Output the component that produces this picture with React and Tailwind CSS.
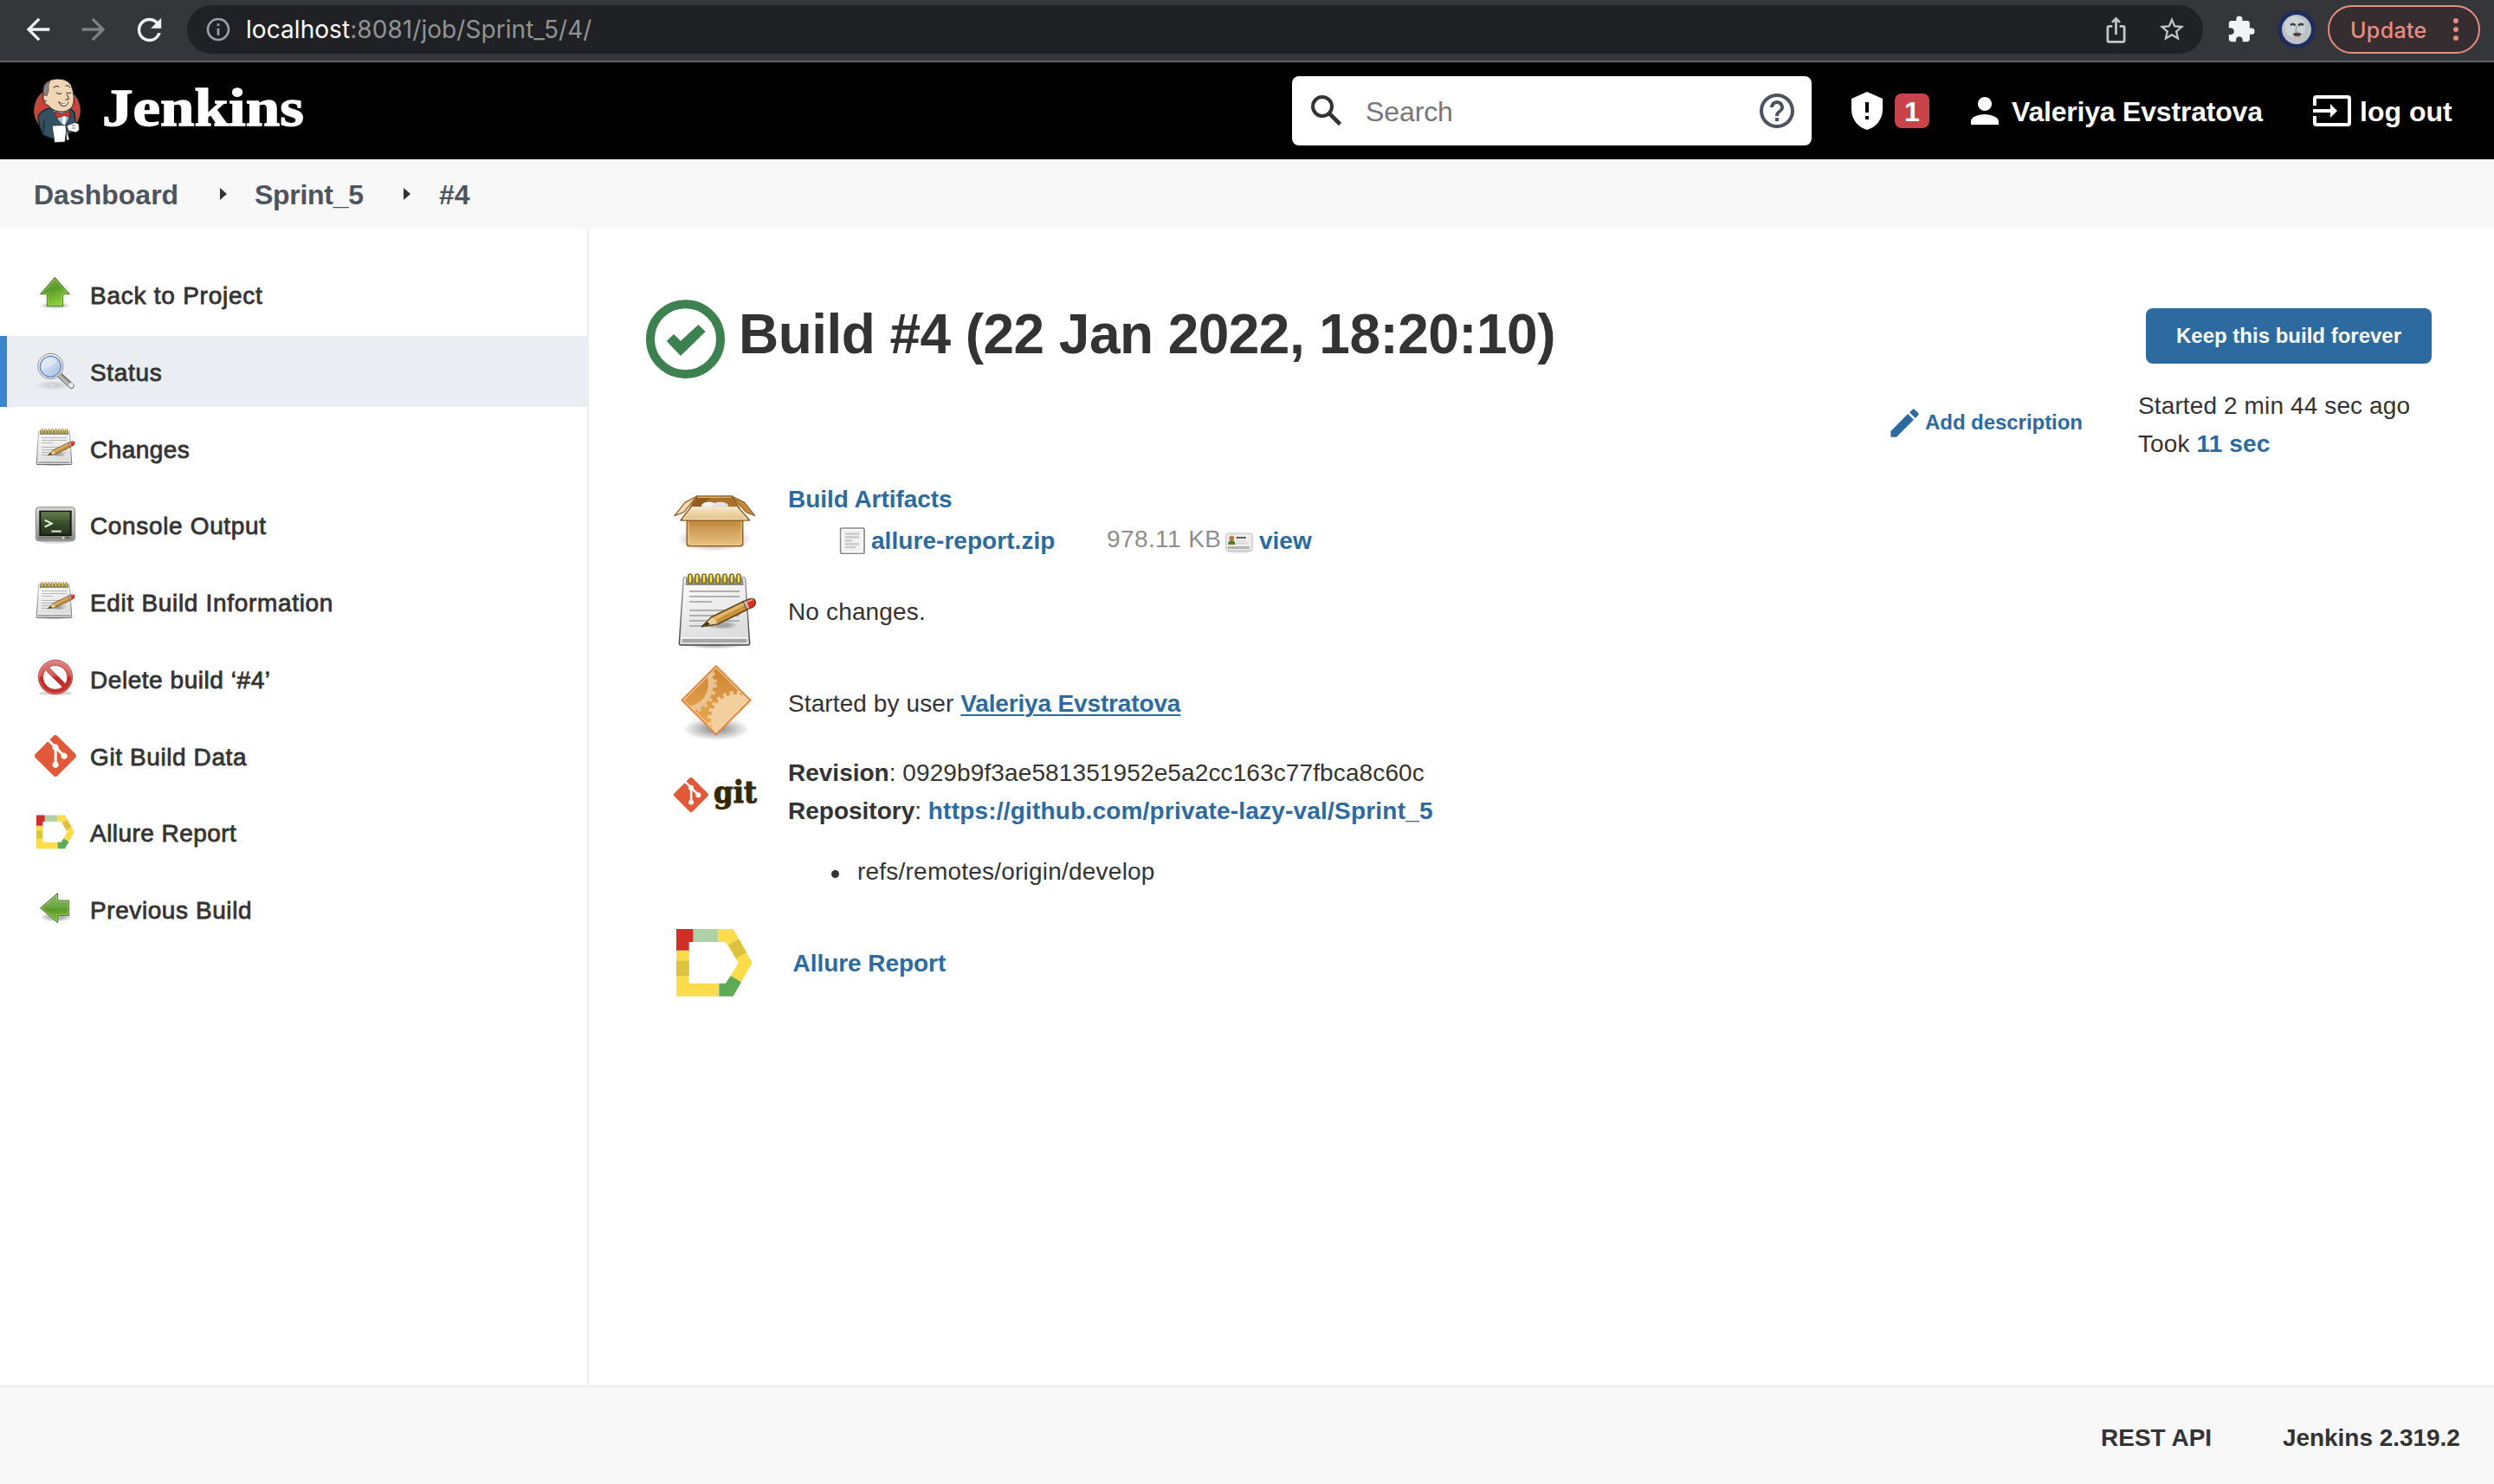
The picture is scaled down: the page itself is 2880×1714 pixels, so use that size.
import React from 'react';
import {
  MdArrowBack,
  MdArrowForward,
  MdEdit,
  MdExtension,
  MdHelpOutline,
  MdInfoOutline,
  MdIosShare,
  MdPerson,
  MdRefresh,
  MdStarBorder,
} from 'react-icons/md';
import { SiGit } from 'react-icons/si';

/* ---------- Drawn icons ---------- */

function UpArrow({ className }) {
  return (
    <svg viewBox="120 52 144 144" className={className}>
      <defs>
        <linearGradient id="up-fill" x1="0" y1="0" x2="0.4" y2="1">
          <stop offset="0" stopColor="#7fae52" />
          <stop offset="0.5" stopColor="#5f9c2b" />
          <stop offset="1" stopColor="#86cf3a" />
        </linearGradient>
        <radialGradient id="up-shadow">
          <stop offset="0.5" stopColor="#000" stopOpacity="0.22" />
          <stop offset="1" stopColor="#000" stopOpacity="0" />
        </radialGradient>
      </defs>
      <ellipse cx="191" cy="163" rx="56" ry="12" fill="url(#up-shadow)" />
      <path d="M190 65L241 123H218V164H163V123H140Z" fill="url(#up-fill)" stroke="#3f7a0c" strokeWidth="3" />
      <path d="M190 71L233 120H215V161H166V120H147Z" fill="none" stroke="#b5d893" strokeWidth="2" opacity="0.8" />
    </svg>
  );
}

function LeftArrow({ className }) {
  return (
    <svg viewBox="120 1042 144 144" className={className}>
      <defs>
        <linearGradient id="left-fill" x1="0" y1="0" x2="0" y2="1">
          <stop offset="0" stopColor="#8dbb66" />
          <stop offset="0.48" stopColor="#6ba53f" />
          <stop offset="0.55" stopColor="#5c9a2a" />
          <stop offset="1" stopColor="#84c23d" />
        </linearGradient>
        <radialGradient id="left-shadow">
          <stop offset="0.4" stopColor="#000" stopOpacity="0.3" />
          <stop offset="1" stopColor="#000" stopOpacity="0" />
        </radialGradient>
      </defs>
      <ellipse cx="195" cy="1141" rx="58" ry="18" fill="url(#left-shadow)" />
      <path d="M200 1059V1084H239V1136H200V1161L140 1110Z" fill="url(#left-fill)" stroke="#41761a" strokeWidth="3" />
      <path d="M197 1066V1087H236V1133H197V1155L145 1110Z" fill="none" stroke="#bfe09d" strokeWidth="2" opacity="0.8" />
    </svg>
  );
}

function Magnifier({ className }) {
  return (
    <svg viewBox="120 316 144 144" className={className}>
      <defs>
        <linearGradient id="lens" x1="0" y1="0" x2="1" y2="1">
          <stop offset="0" stopColor="#d7e3f2" />
          <stop offset="0.55" stopColor="#c3d5ec" />
          <stop offset="1" stopColor="#a3bee0" />
        </linearGradient>
        <radialGradient id="lens-shadow">
          <stop offset="0" stopColor="#fff" stopOpacity="0.9" />
          <stop offset="0.3" stopColor="#999" stopOpacity="0.35" />
          <stop offset="1" stopColor="#999" stopOpacity="0" />
        </radialGradient>
      </defs>
      <ellipse cx="183" cy="436" rx="62" ry="17" fill="url(#lens-shadow)" />
      <path d="M208 402L247 438" stroke="#6b6d69" strokeWidth="20" strokeLinecap="round" />
      <path d="M208 402L247 438" stroke="#b9bab7" strokeWidth="14" strokeLinecap="round" />
      <path d="M213 400L244 428" stroke="#7a7c78" strokeWidth="4" />
      <circle cx="246" cy="436" r="8" fill="#eee" />
      <circle cx="175" cy="370" r="44" fill="#f1f1ef" stroke="#8b8d88" strokeWidth="3" />
      <circle cx="175" cy="371" r="36" fill="url(#lens)" stroke="#5f86bf" strokeWidth="4" />
      <path d="M145 376a31 31 0 0 1 52-26c-2 16-22 20-50 34Z" fill="#fff" opacity="0.4" />
    </svg>
  );
}

function Notepad({ className }) {
  return (
    <svg viewBox="60 360 288 288" className={className}>
      <defs>
        <linearGradient id="pad-paper" x1="0" y1="0" x2="0.3" y2="1">
          <stop offset="0" stopColor="#ffffff" />
          <stop offset="1" stopColor="#dcdcdc" />
        </linearGradient>
        <linearGradient id="pad-edge" x1="0" y1="0" x2="0" y2="1">
          <stop offset="0" stopColor="#a6a6a6" />
          <stop offset="1" stopColor="#454545" />
        </linearGradient>
        <radialGradient id="pad-shadow">
          <stop offset="0.4" stopColor="#000" stopOpacity="0.28" />
          <stop offset="1" stopColor="#000" stopOpacity="0" />
        </radialGradient>
      </defs>
      <ellipse cx="195" cy="613" rx="110" ry="16" fill="url(#pad-shadow)" />
      <path d="M94 380H296Q302 380 302 386L317 610Q317 615 312 615H78Q73 615 73 610L88 386Q88 380 94 380Z" fill="url(#pad-paper)" stroke="url(#pad-edge)" strokeWidth="4.5" />
      <path d="M96 384H294L296 408H95Z" fill="#8d8e89" />
      <path d="M84 594H306L307 606H83Z" fill="#a7a7a7" />
      <path d="M79 590H311" stroke="#fff" strokeWidth="3" />
      <path d="M108 429H282M108 447H282M108 465H186M108 495H282M108 513H282M108 531H282M108 549H190" stroke="#b0b0b0" strokeWidth="5.5" />
      <g fill="#fbe75b" stroke="#8b7418" strokeWidth="5">
        <rect x="105" y="369" width="12" height="32" rx="6" />
        <rect x="129" y="369" width="12" height="32" rx="6" />
        <rect x="153" y="369" width="12" height="32" rx="6" />
        <rect x="177" y="369" width="12" height="32" rx="6" />
        <rect x="201" y="369" width="12" height="32" rx="6" />
        <rect x="225" y="369" width="12" height="32" rx="6" />
        <rect x="249" y="369" width="12" height="32" rx="6" />
        <rect x="273" y="369" width="12" height="32" rx="6" />
      </g>
      <ellipse cx="222" cy="546" rx="56" ry="15" fill="url(#pad-shadow)" />
      <path d="M151 551L186 517L297 463L309 492L208 542Z" fill="#c8913c" stroke="#5a4010" strokeWidth="4.5" strokeLinejoin="round" />
      <path d="M190 520L296 468L300 476L198 528Z" fill="#e2b86e" />
      <path d="M155 548L187 519L198 526L205 541Z" fill="#e6cf98" />
      <path d="M152 550L172 535L179 544Z" fill="#2e2a1c" />
      <path d="M295 464L318 455Q332 451 336 462Q341 476 327 484L308 492Z" fill="#dd2f28" stroke="#5a4010" strokeWidth="4" />
      <path d="M296 466L307 461L315 487L308 490Z" fill="#b9bcc0" />
      <path d="M311 464L326 458" stroke="#f79a8f" strokeWidth="6" strokeLinecap="round" />
    </svg>
  );
}

function Terminal({ className }) {
  return (
    <svg viewBox="120 851 144 144" className={className}>
      <defs>
        <linearGradient id="term-case" x1="0" y1="0" x2="0" y2="1">
          <stop offset="0" stopColor="#d4d5d2" />
          <stop offset="0.6" stopColor="#a3a5a0" />
          <stop offset="1" stopColor="#777974" />
        </linearGradient>
        <linearGradient id="term-screen" x1="0" y1="0" x2="0" y2="1">
          <stop offset="0" stopColor="#6c8a55" />
          <stop offset="0.5" stopColor="#3c5230" />
          <stop offset="1" stopColor="#25331d" />
        </linearGradient>
      </defs>
      <ellipse cx="192" cy="981" rx="50" ry="8" fill="#000" opacity="0.12" />
      <rect x="124.500" y="862.500" width="135" height="117" rx="11" fill="url(#term-case)" stroke="#7b7d78" strokeWidth="3" />
      <rect x="128" y="866" width="128" height="110" rx="8" fill="none" stroke="#eee" strokeWidth="2" opacity="0.7" />
      <rect x="136" y="874" width="112" height="88" rx="2" fill="#10150d" />
      <rect x="142" y="879" width="100" height="78" fill="url(#term-screen)" />
      <path d="M142 886H242M142 894H242M142 902H242M142 910H242M142 918H242M142 926H242M142 934H242" stroke="#1e2b16" strokeWidth="2" opacity="0.45" />
      <path d="M155 907L179 919L155 931" fill="none" stroke="#eef8e6" strokeWidth="6" />
      <path d="M178 946H212" stroke="#e2f3d8" strokeWidth="6" />
      <rect x="216" y="965" width="7" height="7" fill="#c9f0a8" />
      <rect x="226" y="964" width="13" height="9" fill="#666" />
    </svg>
  );
}

function NoEntry({ className }) {
  return (
    <svg viewBox="120 243 144 144" className={className}>
      <defs>
        <linearGradient id="no-fill" x1="0" y1="0" x2="0" y2="1">
          <stop offset="0" stopColor="#e08480" />
          <stop offset="0.47" stopColor="#d65551" />
          <stop offset="0.5" stopColor="#c22723" />
          <stop offset="1" stopColor="#c9302b" />
        </linearGradient>
      </defs>
      <ellipse cx="192" cy="365" rx="58" ry="8" fill="#000" opacity="0.15" />
      <path
        fillRule="evenodd"
        d="M192 250a59 59 0 1 0 0 118a59 59 0 1 0 0-118ZM157 284L217 344A43 43 0 0 1 157 284ZM169 275A42 42 0 0 1 227 333Z"
        fill="url(#no-fill)"
        stroke="#a8413e"
        strokeWidth="2.500"
      />
      <circle cx="192" cy="309" r="55.500" fill="none" stroke="#efb0ad" strokeWidth="2" opacity="0.7" />
    </svg>
  );
}

function AllureLogo({ className }) {
  return (
    <svg viewBox="53 642 288 288" className={className}>
      <path d="M65 743H109V857H213V902H65Z" fill="#fbdc4b" />
      <path d="M65 779H109V831H65Z" fill="#dcc241" />
      <path d="M65 669H124V714H109V743H65Z" fill="#d12e27" />
      <path d="M124 669H210V714H124Z" fill="#b0d0a8" />
      <path d="M210 669H262L328 786L290 853L253 831L280 786L236 714H210Z" fill="#fbdc4b" />
      <path d="M245 724L282 704L308 750L272 772Z" fill="#dcc241" />
      <path d="M213 857H236L253 831L290 853L262 902H213Z" fill="#5faa55" />
    </svg>
  );
}

function PackageBox({ className }) {
  return (
    <svg viewBox="50 60 288 288" className={className}>
      <defs>
        <linearGradient id="box-front" x1="0" y1="0" x2="0" y2="1">
          <stop offset="0" stopColor="#b98135" />
          <stop offset="0.35" stopColor="#cf9d55" />
          <stop offset="1" stopColor="#e9c283" />
        </linearGradient>
        <linearGradient id="box-flap" x1="0" y1="0" x2="0" y2="1">
          <stop offset="0" stopColor="#f4e6c8" />
          <stop offset="1" stopColor="#e3bd7e" />
        </linearGradient>
        <radialGradient id="box-shadow">
          <stop offset="0.6" stopColor="#000" stopOpacity="0.2" />
          <stop offset="1" stopColor="#000" stopOpacity="0" />
        </radialGradient>
      </defs>
      <ellipse cx="193" cy="248" rx="130" ry="43" fill="url(#box-shadow)" />
      <path d="M99 180H292V264Q292 272 284 272H107Q99 272 99 264Z" fill="url(#box-front)" stroke="#99642a" strokeWidth="5" />
      <path d="M104 186V262Q104 267 109 267H282Q287 267 287 262V186" fill="none" stroke="#f5dcae" strokeWidth="3" opacity="0.8" />
      <path d="M134 99L92 121L56 167L88 155Z" fill="#f1ddb6" stroke="#99642a" strokeWidth="4" strokeLinejoin="round" />
      <path d="M254 99L298 121L334 167L304 155Z" fill="#c98b3b" stroke="#99642a" strokeWidth="4" strokeLinejoin="round" />
      <path d="M134 99H254L280 140H110Z" fill="#a87329" stroke="#99642a" strokeWidth="5" strokeLinejoin="round" />
      <path d="M134 104H180L150 136H116Z" fill="#8e5d1e" />
      <path d="M136 103H252" stroke="#f0d3a0" strokeWidth="2.500" />
      <ellipse cx="175" cy="133" rx="26" ry="14" fill="#f3f3f3" />
      <ellipse cx="215" cy="133" rx="27" ry="14" fill="#e3e3e3" />
      <path d="M112 138H276L316 183H77Z" fill="url(#box-flap)" stroke="#99642a" strokeWidth="5" strokeLinejoin="round" />
      <path d="M114 139H274" stroke="#faf0d8" strokeWidth="6" />
      <path d="M115 142L86 179H306L274 142" fill="none" stroke="#f9ecd0" strokeWidth="3" />
    </svg>
  );
}

function DocumentIcon({ className }) {
  return (
    <svg viewBox="624 200 96 96" className={className}>
      <rect x="632" y="206" width="82" height="88" rx="4" fill="#f1f1f1" stroke="#858585" strokeWidth="5" />
      <rect x="637" y="211" width="72" height="78" fill="none" stroke="#fff" strokeWidth="4" />
      <path d="M648 226H696M648 237H696M648 249H672M648 261H696M648 272H684" stroke="#c6c6c6" strokeWidth="6.500" />
    </svg>
  );
}

function BadgeCard({ className }) {
  return (
    <svg viewBox="0 0 32 24" className={className}>
      <ellipse cx="16" cy="21.500" rx="14" ry="2" fill="#000" opacity="0.15" />
      <rect x="0.700" y="1" width="30.500" height="20" rx="2" fill="#ededed" stroke="#bdbdbd" strokeWidth="1" />
      <circle cx="7.300" cy="6.800" r="3" fill="#c07a35" />
      <path d="M3 14Q3 9 7.300 9.200Q11.600 9 11.600 14Z" fill="#5c7a2c" />
      <path d="M13 6H24" stroke="#333" strokeWidth="1.800" strokeDasharray="2 .6" />
      <path d="M13 10H24M13 12.500H26" stroke="#cfcfcf" strokeWidth="1.200" />
      <path d="M3 17.500H28" stroke="#888" strokeWidth="3" strokeDasharray="1 .8" />
    </svg>
  );
}

function GearDiamond({ className }) {
  return (
    <svg viewBox="56 672 288 288" className={className}>
      <defs>
        <linearGradient id="dia-fill" x1="0" y1="0" x2="0" y2="1">
          <stop offset="0" stopColor="#cb8434" />
          <stop offset="1" stopColor="#eeae55" />
        </linearGradient>
        <radialGradient id="dia-shadow">
          <stop offset="0" stopColor="#000" stopOpacity="0.5" />
          <stop offset="1" stopColor="#000" stopOpacity="0" />
        </radialGradient>
        <clipPath id="dia-clip">
          <path d="M200 695L312 806L200 917L88 806Z" />
        </clipPath>
      </defs>
      <ellipse cx="200" cy="906" rx="116" ry="40" fill="url(#dia-shadow)" />
      <path d="M200 686L320 806L200 926L80 806Z" fill="url(#dia-fill)" />
      <g clipPath="url(#dia-clip)">
        <circle cx="94" cy="750" r="88" fill="none" stroke="#eac391" strokeWidth="18" />
        <circle cx="94" cy="750" r="102" fill="none" stroke="#eac391" strokeWidth="12" strokeDasharray="12 14" />
        <circle cx="268" cy="872" r="86" fill="#f3cf9f" />
        <circle cx="268" cy="872" r="91" fill="none" stroke="#f3cf9f" strokeWidth="14" strokeDasharray="11 13" />
      </g>
      <path d="M200 693L313 806L200 919L87 806Z" fill="none" stroke="#f8dcb4" strokeWidth="4" opacity="0.75" />
      <path d="M200 687L319 806L200 925L81 806Z" fill="none" stroke="#e47f33" strokeWidth="5" />
    </svg>
  );
}

function SuccessIcon({ className }) {
  return (
    <svg viewBox="0 0 92 92" className={className}>
      <circle cx="45.500" cy="45.700" r="40.500" fill="none" stroke="#3e8150" strokeWidth="10" />
      <path d="M23.700 48L32 40L40 47.700L60.500 29L68.700 37L40 65Z" fill="#3e8150" />
    </svg>
  );
}

function Butler({ className }) {
  return (
    <svg viewBox="36 86 60 84" className={className}>
      <ellipse cx="66" cy="127.500" rx="26.500" ry="27" fill="#c8443a" stroke="#6b6b6b" strokeWidth="0.800" />
      <path d="M44 134Q48 127 57 125L80 124L86 130L88 150L79 155L76 160H60L50 156Q45 148 44 134Z" fill="#335061" stroke="#111c24" strokeWidth="1.200" />
      <path d="M51 138L50 153" stroke="#111c24" strokeWidth="1" />
      <path d="M62 128L80 128L79 137L74 146L67 138Z" fill="#9fc0d8" />
      <path d="M72 134L76 134L75 146L72 141Z" fill="#fff" />
      <path d="M50 104Q50 92 66 91Q82 91 84 104Q86 112 85 119Q83 127 74 129Q62 130 56 122Q50 120 50 113Z" fill="#f0d6b7" stroke="#2b2118" strokeWidth="1" />
      <path d="M50 108Q49 97 58 93Q55 97 56 105L54 111Q52 107 50 108Z" fill="#8a8482" stroke="#3a3633" strokeWidth="0.700" />
      <path d="M53 110Q49 109 50 114Q51 118 54 117" fill="#f0d6b7" stroke="#2b2118" strokeWidth="0.900" />
      <path d="M62 101Q65 98 68 100M76 99Q80 98 81 101M65 107Q68 110 71 108M77 107Q80 109 82 107M77 109Q80 113 79 115L76 115M68 118Q74 122 79 118Q77 124 71 122Z" fill="none" stroke="#2b2118" strokeWidth="1" strokeLinecap="round" />
      <path d="M69 119Q74 121 79 118Q77 121.500 73 121.500Z" fill="#fff" />
      <path d="M63.500 129L71 131.500L80 128.500L81.500 135L74.500 133.500L65 136Z" fill="#d33833" stroke="#5a1512" strokeWidth="0.800" />
      <path d="M60 145L76 144.500L76.500 152L75 164L63 164.500Z" fill="#fff" stroke="#222" strokeWidth="0.800" />
      <path d="M77 145L86 141.500L91 143L91.500 150L88 153L79 151Z" fill="#fff" stroke="#222" strokeWidth="0.800" />
      <path d="M83 145H87M83 148H87" stroke="#444" strokeWidth="0.800" />
      <path d="M77 152L80 161L77 162Z" fill="#dfe6ea" />
    </svg>
  );
}

function Avatar({ className }) {
  return (
    <svg viewBox="0 0 44 44" className={className}>
      <circle cx="22" cy="22" r="22" fill="#1f2d5c" />
      <circle cx="22" cy="22" r="17" fill="#b9c3c6" />
      <circle cx="20" cy="19" r="12" fill="#ccd4d5" />
      <path d="M15 17Q18 14.500 20.500 17.500M24 17.500Q27 14.500 30 17" fill="none" stroke="#3b3f45" strokeWidth="2.500" />
      <path d="M22 18L21 25H24" fill="none" stroke="#8b8f90" strokeWidth="1.200" />
      <path d="M17.500 27Q22.500 24.500 28 27L25 30H20Z" fill="#4a3f40" />
      <path d="M20.500 29.500H26" stroke="#a33f3f" strokeWidth="1.500" />
    </svg>
  );
}

function ShieldAlert({ className }) {
  return (
    <svg viewBox="0 0 36 44" className={className}>
      <path d="M18 0L36 8V20C36 32 28.500 41 18 44C7.500 41 0 32 0 20V8Z" fill="#fff" />
      <path d="M16 12H20V24H16ZM16 28H20V32H16Z" fill="#000" />
    </svg>
  );
}

function LogoutIcon({ className }) {
  return (
    <svg viewBox="0 0 44 36" className={className}>
      <path d="M2 12V4Q2 2 4 2H40Q42 2 42 4V32Q42 34 40 34H4Q2 34 2 32V24" fill="none" stroke="#fff" strokeWidth="4" />
      <path d="M0 16H20V10L28 18L20 26V20H0Z" fill="#fff" />
    </svg>
  );
}

function SearchIcon({ className }) {
  return (
    <svg viewBox="0 0 36 36" className={className}>
      <circle cx="13" cy="13" r="11" fill="none" stroke="#333" strokeWidth="4" />
      <path d="M21 21L33.500 33.500" stroke="#333" strokeWidth="4.600" />
    </svg>
  );
}

/* ---------- Page parts ---------- */

function BrowserBar() {
  return (
    <div className="flex h-[72px] items-center border-b-2 border-[#5f6166] bg-[#35363a] pb-[2px] pl-6">
      <MdArrowBack className="size-[40px] text-[#f1f3f4]" />
      <MdArrowForward className="ml-6 size-[40px] text-[#7f8084]" />
      <MdRefresh className="ml-6 size-[41px] text-[#f1f3f4]" />
      <div className="ml-[23px] flex h-[56px] w-[2328px] items-center rounded-full bg-[#202124] pl-5">
        <MdInfoOutline className="size-8 text-[#9aa0a6]" />
        <span className="ml-4 flex-1 font-['Inter',sans-serif] text-[28px] leading-[40px] tracking-[0.06px] text-[#929395]">
          <span className="text-white">localhost</span>:8081/job/Sprint_5/4/
        </span>
        <MdIosShare className="size-[33px] text-[#c4c5c7]" />
        <MdStarBorder className="ml-[31px] mr-[19px] size-[34px] text-[#c4c5c7]" />
      </div>
      <MdExtension className="ml-[27px] size-[34px] text-[#f1f3f4]" />
      <Avatar className="ml-[25px] size-[44px]" />
      <div className="ml-[14px] flex h-[56px] w-[176px] items-center rounded-full border-2 border-[#e88d84] bg-[#352d2f] pl-[24px] text-[#e88d84]">
        <span className="pt-[1px] font-['Inter',sans-serif] text-[25px] font-medium leading-8 tracking-[0.35px]">Update</span>
        <span className="ml-auto mr-[23px] flex flex-col gap-1">
          <span className="size-[6px] rounded-full bg-[#e88d84]" />
          <span className="size-[6px] rounded-full bg-[#e88d84]" />
          <span className="size-[6px] rounded-full bg-[#e88d84]" />
        </span>
      </div>
    </div>
  );
}

function Header() {
  return (
    <header className="flex h-[112px] items-center bg-black pl-9 text-[32px] font-bold leading-[40px] text-white">
      <Butler className="h-[84px] w-[60px]" />
      <svg viewBox="0 0 256 100" className="ml-3 h-[100px] w-[256px]">
        <text x="10" y="67" textLength="233" lengthAdjust="spacingAndGlyphs" fill="#fff" stroke="#fff" strokeWidth="1.400" className="font-['Liberation_Serif',serif] text-[62px] font-bold">
          Jenkins
        </text>
      </svg>
      <div className="ml-auto flex h-[80px] w-[600px] items-center rounded-lg bg-white pl-[22px] pr-4">
        <SearchIcon className="size-9" />
        <span className="ml-[27px] flex-1 pt-[2px] font-normal tracking-[-0.1px] text-[#777]">Search</span>
        <MdHelpOutline className="size-12 text-[#4d545d]" />
      </div>
      <ShieldAlert className="ml-[46px] h-[44px] w-[36px]" />
      <span className="ml-[14px] flex h-10 w-10 items-center justify-center rounded-lg bg-[#cb434a] pt-[1px]">1</span>
      <MdPerson className="ml-10 size-12" />
      <span className="ml-[7px] w-[292px] whitespace-nowrap pt-[2px] tracking-[-0.2px]">Valeriya Evstratova</span>
      <LogoutIcon className="ml-[56px] h-[36px] w-[44px]" />
      <span className="ml-[10px] mr-[47px] w-[108px] whitespace-nowrap pt-[2px]">log out</span>
    </header>
  );
}

function Crumb() {
  return (
    <svg viewBox="0 0 8 14" className="h-[14px] w-[8px]">
      <path d="M0 0L8 7L0 14Z" fill="#333" />
    </svg>
  );
}

function Breadcrumbs() {
  return (
    <nav className="flex h-[80px] items-center bg-[#f8f8f8] pl-[39px] text-[32px] font-bold leading-[40px] text-[#4d545d]">
      <span className="w-[215px] pt-[2px]">Dashboard</span>
      <Crumb />
      <span className="ml-[32px] w-[172px] pt-[2px] tracking-[-0.3px]">Sprint_5</span>
      <Crumb />
      <span className="ml-[33px] pt-[2px]">#4</span>
    </nav>
  );
}

const GitMark = ({ className }) => <SiGit className={`${className} text-[#e2593a]`} />;

const tasks = [
  { label: 'Back to Project', Icon: UpArrow, spacing: 'tracking-[0.75px]' },
  { label: 'Status', Icon: Magnifier, spacing: 'tracking-[0.65px]', active: true },
  { label: 'Changes', Icon: Notepad, spacing: 'tracking-[0.45px]' },
  { label: 'Console Output', Icon: Terminal, spacing: 'tracking-[0.65px]' },
  { label: 'Edit Build Information', Icon: Notepad, spacing: 'tracking-[0.68px]' },
  { label: 'Delete build ‘#4’', Icon: NoEntry, spacing: 'tracking-[0.55px]' },
  { label: 'Git Build Data', Icon: GitMark, spacing: 'tracking-[0.6px]' },
  { label: 'Allure Report', Icon: AllureLogo, spacing: 'tracking-[0.45px]' },
  { label: 'Previous Build', Icon: LeftArrow, spacing: 'tracking-[0.58px]' },
];

function Sidebar() {
  return (
    <aside className="flex w-[680px] shrink-0 flex-col gap-[6.75px] border-r-2 border-[#eaeef2] pt-[35px]">
      {tasks.map(({ label, Icon, spacing, active }) => (
        <a
          key={label}
          className={`flex h-[82px] items-center border-l-8 pl-8 ${active ? 'border-[#3b85d0] bg-[#eaeef2]' : 'border-transparent'}`}
        >
          <Icon className="size-12" />
          <span className={`ml-4 pt-[4px] leading-[44px] [-webkit-text-stroke:0.8px_#333] ${spacing}`}>{label}</span>
        </a>
      ))}
    </aside>
  );
}

function Main() {
  return (
    <main className="flex flex-1 flex-col">
      <div className="flex h-[296px] pl-[66px]">
        <SuccessIcon className="mt-[82px] size-[92px]" />
        <h1 className="ml-[15px] mt-[84px] whitespace-nowrap text-[64px] font-bold leading-[76px] tracking-[-0.55px]">
          Build #4 (22 Jan 2022, 18:20:10)
        </h1>
        <a className="ml-auto flex h-8 w-[291px] translate-y-[208px] items-center text-[24px] font-bold leading-8 text-[#2d6a9f]">
          <MdEdit className="size-[43px]" />
          <span className="ml-[2px] tracking-[-0.05px]">Add description</span>
        </a>
        <div className="w-[411px] pt-[92px]">
          <button className="ml-[9px] flex h-16 w-[330px] items-center justify-center rounded-lg bg-[#2d6a9f] text-[24px] font-bold text-white">
            Keep this build forever
          </button>
          <p className="mt-[27px] leading-[44px] tracking-[0.12px]">
            Started 2 min 44 sec ago
            <br />
            Took <b className="text-[#2d6a9f]">11 sec</b>
          </p>
        </div>
      </div>

      <div className="flex h-[98px]">
        <PackageBox className="ml-[97px] size-24" />
        <div className="ml-[37px]">
          <div className="-mt-[5px] leading-[44px]">
            <b className="tracking-[-0.05px] text-[#2d6a9f]">Build Artifacts</b>
          </div>
          <div className="mt-[4px] flex items-center pl-[58px]">
            <DocumentIcon className="-mt-[2px] size-8" />
            <b className="ml-[6px] w-[272px] leading-[44px] tracking-[0.05px] text-[#2d6a9f]">allure-report.zip</b>
            <span className="-mt-1 w-[137px] leading-[44px] tracking-[0.4px] text-[#8e8e8e]">978.11 KB</span>
            <BadgeCard className="mt-[4px] h-6 w-8" />
            <b className="ml-[7px] leading-[44px] text-[#2d6a9f]">view</b>
          </div>
        </div>
      </div>

      <div className="flex h-[104px] pt-[2px]">
        <Notepad className="ml-[100px] size-24" />
        <span className="ml-[34px] mt-[25px] leading-[44px] tracking-[0.15px]">No changes.</span>
      </div>

      <div className="flex h-[98px] pt-[2px]">
        <GearDiamond className="ml-[98.500px] size-24" />
        <span className="ml-[35.500px] mt-[27px] leading-[44px]">
          <span className="tracking-[0.1px]">Started by user </span>
          <b className="tracking-[-0.15px] text-[#2d6a9f] underline decoration-2 underline-offset-[3px]">Valeriya Evstratova</b>
        </span>
      </div>

      <div className="flex h-[204px] pt-[11px]">
        <div className="ml-[98px] mt-[27px] flex h-10 items-center">
          <SiGit className="size-10 text-[#e2593a]" />
          <svg viewBox="0 0 56 56" className="ml-[6px] size-[56px]">
            <text x="0" y="36.500" textLength="50" lengthAdjust="spacingAndGlyphs" fill="#362701" stroke="#362701" strokeWidth="1" className="font-['DejaVu_Serif_Condensed','DejaVu_Serif',serif] text-[36px] font-bold">
              git
            </text>
          </svg>
        </div>
        <div className="ml-[30px] leading-[44px]">
          <p>
            <b>Revision</b>: <span className="tracking-[0.12px]">0929b9f3ae581351952e5a2cc163c77fbca8c60c</span>
          </p>
          <p>
            <b>Repository</b>: <b className="tracking-[0.2px] text-[#2d6a9f]">https://github.com/private-lazy-val/Sprint_5</b>
          </p>
          <ul className="mt-[26px] flex items-center pl-[50px]">
            <li className="flex items-center gap-[21px] tracking-[0.22px]">
              <span className="mt-[4px] size-[9px] rounded-full bg-[#333]" />
              refs/remotes/origin/develop
            </li>
          </ul>
        </div>
      </div>

      <div className="flex h-[96px]">
        <AllureLogo className="ml-[97px] size-24" />
        <b className="ml-[42.500px] mt-[27px] leading-[44px] tracking-[-0.05px] text-[#2d6a9f]">Allure Report</b>
      </div>
    </main>
  );
}

export default function App() {
  return (
    <div className="flex h-[1714px] w-[2880px] flex-col overflow-hidden bg-white font-['Liberation_Sans',Arial,sans-serif] text-[28px] text-[#333]">
      <BrowserBar />
      <Header />
      <Breadcrumbs />
      <div className="flex h-[1336px]">
        <Sidebar />
        <Main />
      </div>
      <footer className="flex flex-1 items-center justify-end border-t-2 border-[#eaeef2] bg-[#f8f8f8] pt-[5px] font-bold leading-[44px]">
        <span className="w-[210px]">REST API</span>
        <span className="w-[244px] tracking-[-0.05px]">Jenkins 2.319.2</span>
      </footer>
    </div>
  );
}
